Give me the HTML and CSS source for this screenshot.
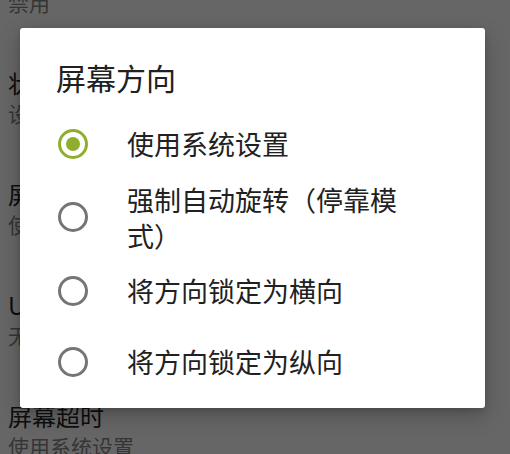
FILE: index.html
```html
<!DOCTYPE html>
<html lang="zh-CN">
<head>
<meta charset="utf-8">
<title>屏幕方向</title>
<link rel="stylesheet" href="styles.css">
</head>
<body>
<div class="settings">
  <div class="row"><div class="row-title">显示</div><div class="row-sub">禁用</div></div>
  <div class="row"><div class="row-title">状态栏</div><div class="row-sub">设置状态栏</div></div>
  <div class="row"><div class="row-title">屏幕方向</div><div class="row-sub">使用系统设置</div></div>
  <div class="row"><div class="row-title">USB 调试</div><div class="row-sub">无</div></div>
  <div class="row"><div class="row-title">屏幕超时</div><div class="row-sub">使用系统设置</div></div>
</div>

<div class="dialog">
  <div class="dialog-title">屏幕方向</div>
  <div class="options">
    <div class="option">
      <svg class="radio" width="30" height="30" viewBox="0 0 30 30"><circle cx="15" cy="15" r="13.5" fill="none" stroke="#8fae2e" stroke-width="3"/><circle cx="15" cy="15" r="7" fill="#8fae2e"/></svg>
      <span class="label">使用系统设置</span>
    </div>
    <div class="option two-line">
      <svg class="radio" width="30" height="30" viewBox="0 0 30 30"><circle cx="15" cy="15" r="13.5" fill="none" stroke="#757575" stroke-width="3"/></svg>
      <span class="label">强制自动旋转（停靠模式）</span>
    </div>
    <div class="option">
      <svg class="radio" width="30" height="30" viewBox="0 0 30 30"><circle cx="15" cy="15" r="13.5" fill="none" stroke="#757575" stroke-width="3"/></svg>
      <span class="label">将方向锁定为横向</span>
    </div>
    <div class="option">
      <svg class="radio" width="30" height="30" viewBox="0 0 30 30"><circle cx="15" cy="15" r="13.5" fill="none" stroke="#757575" stroke-width="3"/></svg>
      <span class="label">将方向锁定为纵向</span>
    </div>
  </div>
</div>
</body>
</html>
```
FILE: styles.css
```css
html, body {
  margin: 0;
  padding: 0;
  width: 510px;
  height: 454px;
  overflow: hidden;
  background: #666666;
  font-family: "Noto Sans CJK SC", "Noto Sans", sans-serif;
}

.settings {
  margin-top: -69px;
  padding-left: 8px;
}

.row {
  padding: 25px 0 26px;
  height: 60px;
}

.row-title {
  font-size: 24px;
  line-height: 32px;
  color: #0e0e0e;
  white-space: nowrap;
}

.row-sub {
  font-size: 21px;
  line-height: 28px;
  color: #353535;
  white-space: nowrap;
}

.dialog {
  position: absolute;
  left: 20px;
  top: 28px;
  width: 465px;
  height: 380px;
  background: #ffffff;
  border-radius: 3px;
  box-shadow: 0 8px 22px rgba(0, 0, 0, 0.22), 0 2px 6px rgba(0, 0, 0, 0.15);
}

.dialog-title {
  padding: 29px 0 0 36px;
  font-size: 30px;
  line-height: 40px;
  height: 40px;
  color: #212121;
  margin-bottom: 11px;
}

.options {
  display: flex;
  flex-direction: column;
}

.option {
  display: flex;
  align-items: center;
  min-height: 71px;
  padding-left: 38px;
}

.option.two-line {
  padding: 1px 0 1px 38px;
}

.radio {
  flex: none;
  display: block;
}

.label {
  margin-left: 39px;
  max-width: 285px;
  font-size: 27px;
  line-height: 36px;
  color: #212121;
}

.two-line .label {
  padding-top: 2px;
}
```
